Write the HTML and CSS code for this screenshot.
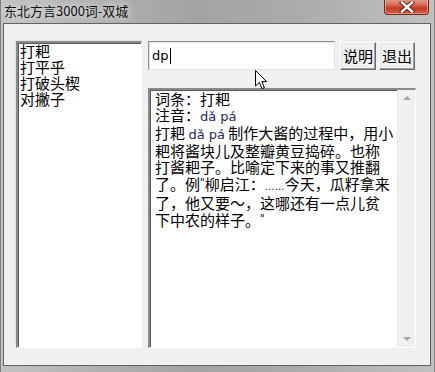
FILE: index.html
```html
<!DOCTYPE html>
<html lang="zh-CN">
<head>
    <meta charset="UTF-8">
    <title>东北方言3000词-双城</title>
    <link rel="stylesheet" href="styles.css">
</head>
<body>
    <div class="window">
        <div class="titlebar">
            <span class="title">东北方言3000词-双城</span>
            <div class="close-btn">
                <svg width="18" height="12" viewBox="0 0 18 12">
                    <path d="M4 1.5 L14 10.5 M14 1.5 L4 10.5" stroke="#5a2a22" stroke-width="4.4" stroke-linecap="square"/>
                    <path d="M4 1.5 L14 10.5 M14 1.5 L4 10.5" stroke="#ffffff" stroke-width="2.4" stroke-linecap="square"/>
                </svg>
            </div>
        </div>

        <div class="client">
            <div class="listbox">
                <div class="list-item">打耙</div>
                <div class="list-item">打平乎</div>
                <div class="list-item">打破头楔</div>
                <div class="list-item">对撇子</div>
            </div>

            <div class="right-col">
                <div class="search-row">
                    <div class="edit">dp<span class="caret"></span></div>
                    <div class="btn">说明</div>
                    <div class="btn">退出</div>
                </div>

                <div class="memo">
                    <div class="memo-text">
                        <div>词条：打耙</div>
                        <div>注音：<span class="py">dǎ pá</span></div>
                        <div>打耙 <span class="py">dǎ pá</span> 制作大酱的过程中，用小</div>
                        <div>耙将酱块儿及整瓣黄豆捣碎。也称</div>
                        <div>打酱耙子。比喻定下来的事又推翻</div>
                        <div>了。例<span class="qt">"</span>柳启江：<span class="dots">……</span>今天，瓜籽拿来</div>
                        <div>了，他又要～，这哪还有一点儿贫</div>
                        <div>下中农的样子。<span class="qt">"</span></div>
                    </div>
                    <div class="scrollbar">
                        <span class="arrow-up"></span>
                        <span class="arrow-down"></span>
                    </div>
                </div>
            </div>

            <svg class="pointer" width="13" height="20" viewBox="0 0 13 20">
                <path d="M0.5 0.5 L0.5 16 L4.3 12.4 L7 18.6 L9.4 17.6 L6.8 11.6 L11.6 11.6 Z" fill="#fff" stroke="#000" stroke-width="1"/>
            </svg>
        </div>
    </div>
</body>
</html>
```

FILE: styles.css
```css
body {
    margin: 0;
    width: 435px;
    height: 372px;
    overflow: hidden;
    font-family: "Noto Sans CJK SC", "Noto Sans", sans-serif;
}
.window {
    width: 435px;
    height: 372px;
    box-sizing: border-box;
    padding-left: 2px;
    background: linear-gradient(90deg, #c3c3c3 0%, #b2b2b2 20%, #a3a3a3 45%, #acacac 70%, #c0c0c0 100%);
    border-left: 1px solid #7d7d7d;
    border-right: 1px solid #7d7d7d;
    position: relative;
}
.titlebar {
    height: 23px;
    display: flex;
    align-items: flex-start;
    justify-content: space-between;
    margin-left: -3px;
}
.title {
    font-size: 13px;
    line-height: 22px;
    padding-left: 4px;
    color: #111;
    text-shadow: 0 0 6px #e6e6e6, 0 0 10px #dcdcdc;
}
.close-btn {
    width: 43px;
    height: 15px;
    margin-right: 5px;
    margin-top: -1px;
    border: 1px solid #6e2a1c;
    border-top: none;
    border-radius: 0 0 4px 4px;
    background: linear-gradient(180deg, #e3a08e 0%, #d56a52 40%, #c23b22 60%, #d8614a 100%);
    box-shadow: inset 0 0 0 1px rgba(255,220,210,0.45);
    display: flex;
    align-items: center;
    justify-content: center;
}
.client {
    width: 428px;
    height: 343px;
    box-sizing: border-box;
    border: 1px solid #626262;
    background: #f0f0f0;
    display: flex;
    padding: 17px 0 0 12px;
    position: relative;
}
.listbox {
    width: 126px;
    height: 307px;
    box-sizing: border-box;
    background: #fff;
    border-style: solid;
    border-width: 2px 1px 1px 2px;
    border-color: #8a8a8a #ffffff #ffffff #8a8a8a;
    box-shadow: inset 1px 1px 0 #5a5a5a, -1px -1px 0 #e3e3e3;
    padding: 0 2px 0 2px;
}
.list-item {
    font-size: 15px;
    line-height: 16px;
    color: #000;
}
.right-col {
    margin-left: 6px;
    display: flex;
    flex-direction: column;
}
.search-row {
    display: flex;
    height: 29px;
    align-items: flex-start;
}
.edit {
    width: 187px;
    height: 29px;
    box-sizing: border-box;
    background: #fff;
    border: 1px solid;
    border-color: #8e8f8f #e3e3e3 #e3e3e3 #8e8f8f;
    box-shadow: inset 1px 1px 0 #e6e6e6;
    font-family: "DejaVu Sans", sans-serif;
    font-size: 13px;
    line-height: 26px;
    padding-left: 3px;
    display: flex;
    align-items: center;
}
.caret {
    display: inline-block;
    width: 1px;
    height: 16px;
    background: #000;
    margin-left: 1px;
}
.btn {
    width: 36px;
    height: 28px;
    box-sizing: border-box;
    margin-top: 1px;
    margin-left: 5px;
    background: #f0f0f0;
    border-style: solid;
    border-width: 1px;
    border-color: #ffffff #6a6a6a #6a6a6a #ffffff;
    box-shadow: inset -1px -1px 0 #a0a0a0, inset 1px 1px 0 #e3e3e3;
    font-size: 15px;
    line-height: 25px;
    text-align: center;
    color: #000;
}
.btn + .btn {
    margin-left: 3px;
}
.memo {
    margin-top: 18px;
    width: 268px;
    height: 260px;
    box-sizing: border-box;
    background: #fff;
    border-style: solid;
    border-width: 2px 1px 1px 2px;
    border-color: #8a8a8a #ffffff #ffffff #8a8a8a;
    box-shadow: inset 1px 1px 0 #5a5a5a;
    display: flex;
}
.memo-text {
    flex: 1;
    padding: 1px 0 0 5px;
    font-size: 15px;
    line-height: 16px;
    color: #000;
    white-space: nowrap;
}
.py {
    font-family: "DejaVu Sans", sans-serif;
    font-size: 13px;
    color: #1a2a5a;
}
.qt {
    font-family: "DejaVu Sans", sans-serif;
    font-size: 10px;
    vertical-align: 4px;
    font-style: italic;
}
.dots {
    font-family: "Liberation Sans", sans-serif;
    font-size: 10px;
}
.scrollbar {
    width: 17px;
    background: #f0f0f0;
    border-left: 1px solid #e8e8e8;
    display: flex;
    flex-direction: column;
    justify-content: space-between;
    align-items: center;
    padding: 6px 0 6px;
}
.arrow-up {
    width: 0;
    height: 0;
    border-left: 4px solid transparent;
    border-right: 4px solid transparent;
    border-bottom: 4px solid #a6a6a6;
}
.arrow-down {
    width: 0;
    height: 0;
    border-left: 4px solid transparent;
    border-right: 4px solid transparent;
    border-top: 4px solid #a6a6a6;
}
.pointer {
    position: absolute;
    left: 251px;
    top: 46px;
}
```
